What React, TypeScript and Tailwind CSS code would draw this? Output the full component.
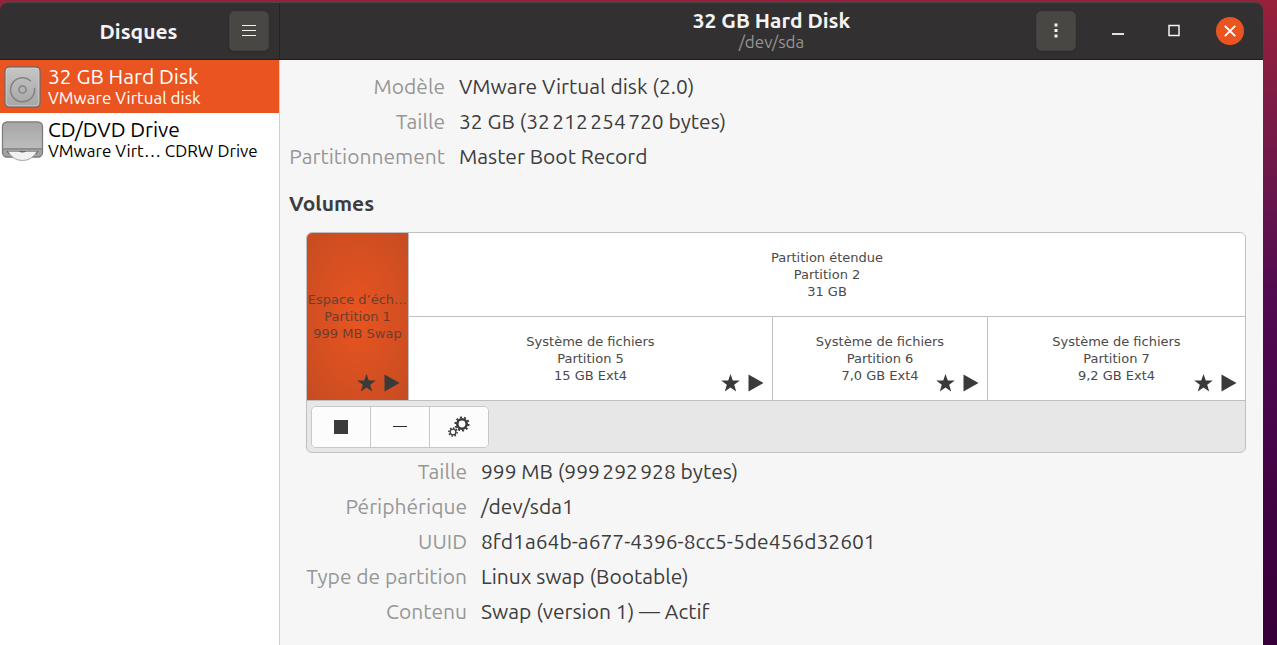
import React from "react";

type Detail = { label: string; value: string };

const diskDetails: Detail[] = [
  { label: "Modèle", value: "VMware Virtual disk (2.0)" },
  { label: "Taille", value: "32 GB (32\u202f212\u202f254\u202f720 bytes)" },
  { label: "Partitionnement", value: "Master Boot Record" },
];

const volumeDetails: Detail[] = [
  { label: "Taille", value: "999 MB (999\u202f292\u202f928 bytes)" },
  { label: "Périphérique", value: "/dev/sda1" },
  { label: "UUID", value: "8fd1a64b-a677-4396-8cc5-5de456d32601" },
  { label: "Type de partition", value: "Linux swap (Bootable)" },
  { label: "Contenu", value: "Swap (version 1) — Actif" },
];

function DetailList({ items, columns }: { items: Detail[]; columns: string }) {
  return (
    <dl className={`grid gap-x-3.5 text-[21px] leading-[35px] ${columns}`}>
      {items.map((item) => (
        <React.Fragment key={item.label}>
          <dt className="text-right whitespace-nowrap text-[#979796]">{item.label}</dt>
          <dd className="whitespace-nowrap text-[#3d3d3d]">{item.value}</dd>
        </React.Fragment>
      ))}
    </dl>
  );
}

function HardDiskIcon() {
  return (
    <svg viewBox="0 0 44 44" className="size-11 shrink-0" aria-hidden="true">
      <defs>
        <linearGradient id="hdd" x1="0" y1="0" x2="0" y2="1">
          <stop offset="0" stopColor="#c6c6c6" />
          <stop offset="1" stopColor="#a6a6a6" />
        </linearGradient>
      </defs>
      <rect x="5" y="2" width="35" height="40" rx="4" fill="url(#hdd)" stroke="#77665f" strokeWidth="1.4" />
      <rect x="6.2" y="3.2" width="32.6" height="37.6" rx="3" fill="none" stroke="#d2d2d2" strokeWidth="0.8" />
      <path d="M30.5 15.8A12 12 0 1 0 34.5 23.5" fill="none" stroke="#828282" strokeWidth="1.5" strokeLinecap="round" />
      <circle cx="22.5" cy="24.5" r="3.6" fill="none" stroke="#828282" strokeWidth="1.5" />
    </svg>
  );
}

function OpticalIcon() {
  return (
    <svg viewBox="0 0 44 44" className="size-11 shrink-0" aria-hidden="true">
      <defs>
        <linearGradient id="odd" x1="0" y1="0" x2="0" y2="1">
          <stop offset="0" stopColor="#a6a6a6" />
          <stop offset="1" stopColor="#bcbcbc" />
        </linearGradient>
      </defs>
      <rect x="2.5" y="4" width="40" height="35" rx="4.5" fill="#a2a2a2" stroke="#7c7c7c" strokeWidth="1.3" />
      <path d="M3.2 30.5V9Q3.2 4.7 7.500 4.7H37.500Q41.800 4.7 41.800 9V30.5Z" fill="url(#odd)" />
      <path d="M3 30.8H42" stroke="#808080" strokeWidth="1.3" />
      <path d="M6.500 33H38.500L36.500 36H8.500Z" fill="#555" />
      <path d="M8 33.500Q13 42.500 22.500 42.500T37 33.500Z" fill="#f2f2f2" stroke="#9a9a9a" strokeWidth="0.9" />
      <path d="M18.500 33Q22.500 36 26.500 33Z" fill="#666" />
    </svg>
  );
}

function StatusIcons() {
  return (
    <span className="absolute right-2 bottom-2 flex items-center gap-2">
      <svg viewBox="0 0 19 18" className="h-[18px] w-[19px]" role="img" aria-label="Favori">
        <path d="M9.500 0L11.800 6.500H18.800L13.200 10.700L15.200 17.500L9.500 13.500L3.800 17.500L5.800 10.700L.2 6.500H7.200Z" fill="#3a3a3a" />
      </svg>
      <svg viewBox="0 0 16 18" className="h-[18px] w-4" role="img" aria-label="Monté">
        <path d="M.5.5V17.500L15.500 9Z" fill="#3a3a3a" />
      </svg>
    </span>
  );
}

function Partition({
  lines,
  className,
  mounted = false,
}: {
  lines: string[];
  className: string;
  mounted?: boolean;
}) {
  return (
    <button
      type="button"
      className={`relative flex min-w-0 flex-col items-center justify-center font-['DejaVu_Sans',sans-serif] text-[13px] leading-[17px] ${className}`}
    >
      {lines.map((line) => (
        <span key={line} className="max-w-full overflow-hidden whitespace-nowrap">
          {line}
        </span>
      ))}
      {mounted && <StatusIcons />}
    </button>
  );
}

function GearsIcon() {
  return (
    <svg viewBox="0 0 24 24" className="size-6" fill="none" stroke="#3a3a3a" aria-hidden="true">
      <circle cx="15" cy="9" r="4.700" strokeWidth="2.600" />
      <circle cx="15" cy="9" r="6.600" strokeWidth="1.900" pathLength="20" strokeDasharray="1 1" />
      <circle cx="6" cy="17" r="2.900" strokeWidth="1.300" />
      <circle cx="6" cy="17" r="4.100" strokeWidth="1.500" pathLength="16" strokeDasharray="1 1" />
    </svg>
  );
}

const headerButton =
  "flex size-10 items-center justify-center rounded-[5px] border border-[#42413f] bg-[#484744] shadow-sm";
const windowButton = "flex size-7 items-center justify-center rounded-full";
const toolButton = "flex h-10 flex-1 items-center justify-center bg-[#fcfcfc]";

export default function App() {
  return (
    <div className="flex min-h-screen flex-col bg-linear-to-b from-[#98203a] via-[#520a50] via-45% to-[#36003a] pt-0.5 pr-3.5 font-['Ubuntu','Noto_Sans',sans-serif]">
      <div className="flex flex-1 flex-col">
        <header className="flex h-[58px] rounded-t-lg border-t border-b border-t-[#484647] border-b-[#1f1e1e] bg-[#323030] text-[#f4f4f4]">
          <div className="grid w-[280px] shrink-0 grid-cols-[1fr_auto_1fr] items-center border-r border-[#242323] pr-2.5">
            <h1 className="col-start-2 pl-2 text-[21px] leading-7 font-bold">Disques</h1>
            <button type="button" aria-label="Menu" className={`${headerButton} justify-self-end`}>
              <svg viewBox="0 0 16 16" className="size-4" stroke="#f0f0f0" strokeWidth="1.200" aria-hidden="true">
                <path d="M1 2.500H15M1 7.500H15M1 12.500H15" />
              </svg>
            </button>
          </div>
          <div className="grid flex-1 grid-cols-[1fr_auto_1fr] items-center pr-[19px]">
            <div className="col-start-2 pl-[19px] text-center">
              <h2 className="text-[21px] leading-[22px] font-bold">32 GB Hard Disk</h2>
              <p className="text-[17px] leading-[22px] text-[#969595]">/dev/sda</p>
            </div>
            <div className="flex items-center gap-7 justify-self-end">
              <button type="button" aria-label="Options du disque" className={headerButton}>
                <svg viewBox="0 0 16 16" className="size-4" fill="#f4f4f4" aria-hidden="true">
                  <path d="M6.500 .5h3v3h-3zM6.500 6h3v3h-3zM6.500 11.500h3v3h-3z" />
                </svg>
              </button>
              <button type="button" aria-label="Réduire" className={windowButton}>
                <svg viewBox="0 0 16 16" className="size-4" stroke="#f4f4f4" strokeWidth="1.800" aria-hidden="true">
                  <path d="M2 11H14" />
                </svg>
              </button>
              <button type="button" aria-label="Agrandir" className={windowButton}>
                <svg viewBox="0 0 16 16" className="size-4" fill="none" stroke="#f4f4f4" strokeWidth="1.500" aria-hidden="true">
                  <path d="M3 2.500H13V12.500H3Z" />
                </svg>
              </button>
              <button type="button" aria-label="Fermer" className={`${windowButton} bg-[#e95420]`}>
                <svg viewBox="0 0 16 16" className="size-4" stroke="#fff" strokeWidth="1.900" aria-hidden="true">
                  <path d="M2.800 2.800L13.200 13.200M13.200 2.800L2.800 13.200" />
                </svg>
              </button>
            </div>
          </div>
        </header>

        <div className="flex flex-1">
          <nav className="w-[280px] shrink-0 border-r border-[#cfcfcf] bg-white" aria-label="Lecteurs">
            <button type="button" className="flex h-[53px] w-full items-center gap-1 bg-[#e95420] text-left text-white">
              <HardDiskIcon />
              <span className="whitespace-nowrap">
                <span className="block text-[21px] leading-[22px]">32 GB Hard Disk</span>
                <span className="block text-[17px] leading-[22px]">VMware Virtual disk</span>
              </span>
            </button>
            <button type="button" className="flex h-[54px] w-full items-center gap-1 text-left text-black">
              <OpticalIcon />
              <span className="whitespace-nowrap">
                <span className="block text-[21px] leading-[22px]">CD/DVD Drive</span>
                <span className="block text-[17px] leading-[22px]">VMware Virt… CDRW Drive</span>
              </span>
            </button>
          </nav>

          <main className="min-w-0 flex-1 bg-[#f6f6f6] pt-[9px] pr-[17px] pl-[9px]">
            <DetailList items={diskDetails} columns="grid-cols-[156px_1fr]" />
            <h3 className="pt-[15px] text-[21px] leading-7 font-bold text-[#3d3d3d]">Volumes</h3>
            <section className="mt-[15px] mb-px ml-[17px] overflow-hidden rounded-[6px] border border-[#bfbfbf] bg-[#e7e7e7]">
              <div className="flex h-[168px] border-b border-[#bfbfbf] bg-white text-[#4a4a4a]">
                <Partition
                  lines={["Espace d’éch…", "Partition 1", "999 MB Swap"]}
                  className="w-[102px] shrink-0 border-r border-[#bfbfbf] bg-radial from-[#e95420] to-[#c64c22] text-[#6b3f2e]"
                  mounted
                />
                <div className="flex min-w-0 flex-1 flex-col">
                  <Partition
                    lines={["Partition étendue", "Partition 2", "31 GB"]}
                    className="flex-1 border-b border-[#bfbfbf]"
                  />
                  <div className="grid flex-1 grid-cols-[364fr_215fr_257fr]">
                    <Partition
                      lines={["Système de fichiers", "Partition 5", "15 GB Ext4"]}
                      className="border-r border-[#bfbfbf]"
                      mounted
                    />
                    <Partition
                      lines={["Système de fichiers", "Partition 6", "7,0 GB Ext4"]}
                      className="border-r border-[#bfbfbf]"
                      mounted
                    />
                    <Partition lines={["Système de fichiers", "Partition 7", "9,2 GB Ext4"]} className="" mounted />
                  </div>
                </div>
              </div>
              <div className="flex h-[51px] items-center px-1">
                <div className="flex w-[178px] divide-x divide-[#c8c8c8] overflow-hidden rounded-[5px] border border-[#c8c8c8]">
                  <button type="button" aria-label="Désactiver" className={toolButton}>
                    <span className="size-3.5 bg-[#3a3a3a]" />
                  </button>
                  <button type="button" aria-label="Supprimer la partition" className={toolButton}>
                    <span className="h-px w-3.5 bg-[#2a2a2a]" />
                  </button>
                  <button type="button" aria-label="Options de partition" className={toolButton}>
                    <GearsIcon />
                  </button>
                </div>
              </div>
            </section>
            <DetailList items={volumeDetails} columns="grid-cols-[178px_1fr]" />
          </main>
        </div>
      </div>
    </div>
  );
}
